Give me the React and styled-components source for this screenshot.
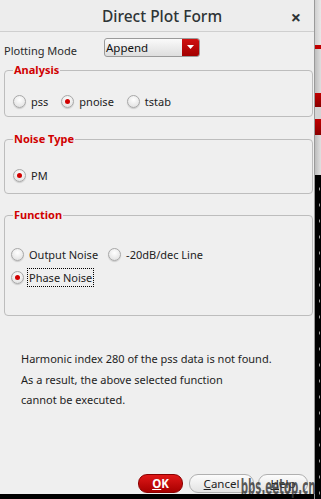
import React from 'react';
import styled, { createGlobalStyle } from 'styled-components';

const Global = createGlobalStyle`
  html, body {
    margin: 0;
    padding: 0;
    background: #000;
    overflow: hidden;
  }
  body {
    font-family: "Noto Sans", "Open Sans", sans-serif;
    font-size: 11px;
    color: #2a2a2a;
  }
`;

const Screen = styled.div`
  display: flex;
  width: 321px;
  height: 499px;
`;

const Dialog = styled.div`
  width: 314px;
  height: 494px;
  background: #efefef;
  display: flex;
  flex-direction: column;
`;

const TitleBar = styled.div`
  height: 31px;
  flex-shrink: 0;
  display: flex;
  align-items: center;
  justify-content: center;
  position: relative;
  background: #ededed;
  border-bottom: 1px solid #cfcfcf;
  font-size: 15.5px;
  font-weight: 500;
  color: #2e3436;
  padding-left: 10px;
`;

const CloseButton = styled.span`
  position: absolute;
  right: 13px;
  top: 5px;
  font-size: 18px;
  font-weight: 700;
  color: #2e3436;
`;

const Body = styled.div`
  flex: 1;
  display: flex;
  flex-direction: column;
  padding: 6px 1px 0 4px;
`;

const ModeRow = styled.div`
  display: flex;
  align-items: center;
  height: 19px;
`;

const ModeLabel = styled.span`
  width: 100px;
  padding-top: 6px;
`;

const Select = styled.div`
  width: 94px;
  height: 17px;
  display: flex;
  border: 1px solid #9a9a9a;
  border-radius: 3px;
  overflow: hidden;
  background: linear-gradient(#fafafa, #dedede);
`;

const SelectText = styled.span`
  flex: 1;
  padding-left: 1px;
  line-height: 17px;
  font-size: 11.5px;
  color: #111;
`;

const SelectArrow = styled.span`
  width: 17px;
  display: flex;
  align-items: center;
  justify-content: center;
  background: linear-gradient(#d01010, #a20000);
`;

const Group = styled.fieldset`
  margin: ${p => p.$top}px 0 0 0;
  padding: ${p => p.$pad}px 0 0 8px;
  height: ${p => p.$height}px;
  border: 1px solid #bdbdbd;
  border-radius: 4px;
  box-sizing: border-box;
  min-width: 0;
`;

const Legend = styled.legend`
  color: #d00000;
  font-weight: 700;
  font-size: 11px;
  line-height: 16px;
  padding: 0 1px;
  margin-left: 0;
`;

const OptionRow = styled.div`
  display: flex;
  align-items: center;
  gap: ${p => p.$gap || 11}px;
  height: 21px;
  margin-left: ${p => p.$shift || 0}px;
  margin-bottom: 2px;
`;

const Option = styled.label`
  display: flex;
  align-items: center;
  gap: 3px;
  font-size: 11px;
  color: #222;
`;

const RadioDot = styled.span`
  width: 11px;
  height: 11px;
  border-radius: 50%;
  border: 1px solid #a8a8a8;
  background: radial-gradient(circle at 50% 35%, #ffffff, #dcdcdc);
  box-shadow: 0 1px 1px rgba(0, 0, 0, 0.15);
  display: flex;
  align-items: center;
  justify-content: center;
  flex-shrink: 0;

  &::after {
    content: '';
    width: 5px;
    height: 5px;
    border-radius: 50%;
    background: ${p => (p.$checked ? '#d10000' : 'transparent')};
  }
`;

const OptionText = styled.span`
  padding: 1px 1px;
  border: 1px dotted ${p => (p.$focus ? '#000' : 'transparent')};
`;

const Message = styled.div`
  margin-top: 33px;
  padding-left: 17px;
  line-height: 20.5px;
  font-size: 11px;
  color: #1e1e1e;
`;

const ButtonBar = styled.div`
  margin-top: auto;
  display: flex;
  justify-content: flex-end;
  align-items: center;
  padding: 0 5px 1px 0;
  position: relative;
`;

const Button = styled.div`
  box-sizing: border-box;
  width: ${p => p.$w}px;
  height: 19px;
  margin-left: ${p => p.$gap}px;
  border-radius: 9px;
  display: flex;
  align-items: center;
  justify-content: center;
  font-size: 11.5px;
  border: 1px solid ${p => (p.$primary ? '#8a0000' : '#b0b0b0')};
  background: ${p =>
    p.$primary
      ? 'linear-gradient(#e01818, #a80000)'
      : 'linear-gradient(#fcfcfc, #e2e2e2)'};
  color: ${p => (p.$primary ? '#fff' : '#222')};
  font-weight: ${p => (p.$primary ? 700 : 400)};
`;

const Watermark = styled.span`
  position: absolute;
  right: -2px;
  bottom: -4px;
  font-family: "DejaVu Sans Condensed", "Liberation Sans Narrow", sans-serif;
  font-weight: 700;
  font-size: 21px;
  line-height: 22px;
  color: rgba(60, 60, 60, 0.85);
  transform: scaleX(0.54);
  transform-origin: right bottom;
  white-space: nowrap;
`;

const Strip = styled.div`
  flex: 1;
  display: flex;
  flex-direction: column;
  border-left: 1px solid #9a9a9a;
`;

const StripPart = styled.div`
  height: ${p => p.$h}px;
  background: ${p => p.$bg};
  flex-shrink: 0;
`;

const StripRest = styled.div`
  flex: 1;
  background-color: #000;
  background-image: radial-gradient(#9a9a9a 0.6px, transparent 0.7px);
  background-size: 7px 16px;
  background-position: 1px 6px;
`;

const Arrow = () => (
  <svg width="7" height="5" viewBox="0 0 7 5">
    <path d="M0 0 L7 0 L3.5 4 Z" fill="#fff" />
  </svg>
);

const Radio = ({ checked, focus, children }) => (
  <Option>
    <RadioDot $checked={checked} />
    <OptionText $focus={focus}>{children}</OptionText>
  </Option>
);

export default function App() {
  return (
    <>
      <Global />
      <Screen>
        <Dialog>
          <TitleBar>
            Direct Plot Form
            <CloseButton>×</CloseButton>
          </TitleBar>
          <Body>
            <ModeRow>
              <ModeLabel>Plotting Mode</ModeLabel>
              <Select>
                <SelectText>Append</SelectText>
                <SelectArrow>
                  <Arrow />
                </SelectArrow>
              </Select>
            </ModeRow>

            <Group $top={5} $height={55} $pad={13}>
              <Legend>Analysis</Legend>
              <OptionRow>
                <Radio>pss</Radio>
                <Radio checked>pnoise</Radio>
                <Radio>tstab</Radio>
              </OptionRow>
            </Group>

            <Group $top={14} $height={63} $pad={18}>
              <Legend>Noise Type</Legend>
              <OptionRow>
                <Radio checked>PM</Radio>
              </OptionRow>
            </Group>

            <Group $top={13} $height={109} $pad={21}>
              <Legend>Function</Legend>
              <OptionRow $shift={-2} $gap={8}>
                <Radio>Output Noise</Radio>
                <Radio>-20dB/dec Line</Radio>
              </OptionRow>
              <OptionRow $shift={-2}>
                <Radio checked focus>Phase Noise</Radio>
              </OptionRow>
            </Group>

            <Message>
              Harmonic index 280 of the pss data is not found.
              <br />
              As a result, the above selected function
              <br />
              cannot be executed.
            </Message>

            <ButtonBar>
              <Button $primary $w={45} $gap={0}>
                <u>O</u>K
              </Button>
              <Button $w={65} $gap={6}>
                <u>C</u>ancel
              </Button>
              <Button $w={50} $gap={4}>
                <u>H</u>elp
              </Button>
              <Watermark>bbs.eetop.cn</Watermark>
            </ButtonBar>
          </Body>
        </Dialog>
        <Strip>
          <StripPart $h={45} $bg="linear-gradient(90deg, #cfcfcf, #e8e8e8)" />
          <StripPart $h={4} $bg="#c00000" />
          <StripPart $h={44} $bg="linear-gradient(90deg, #bdbdbd, #dedede)" />
          <StripPart $h={14} $bg="linear-gradient(#c00000, #8a0000)" />
          <StripPart $h={12} $bg="#d4d4d4" />
          <StripPart $h={16} $bg="linear-gradient(#c00000, #8a0000)" />
          <StripPart $h={40} $bg="linear-gradient(90deg, #bdbdbd, #e0e0e0)" />
          <StripRest />
        </Strip>
      </Screen>
    </>
  );
}
